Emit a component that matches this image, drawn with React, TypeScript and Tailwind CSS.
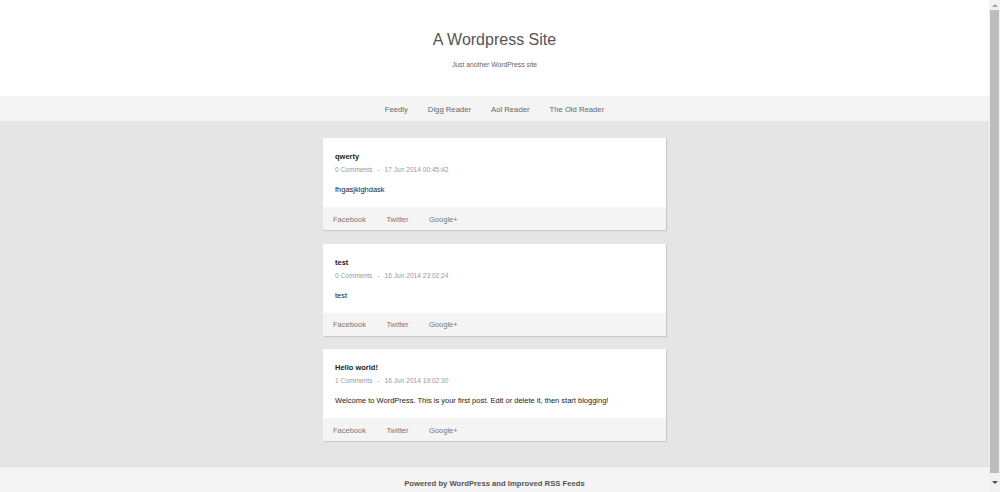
const posts = [
  { title: "qwerty", comments: "0 Comments", date: "17 Jun 2014 00:45:42", body: "fhgasjklghdask" },
  { title: "test", comments: "0 Comments", date: "16 Jun 2014 23:02:24", body: "test" },
  {
    title: "Hello world!",
    comments: "1 Comments",
    date: "16 Jun 2014 19:02:30",
    body: "Welcome to WordPress. This is your first post. Edit or delete it, then start blogging!",
  },
];

const readers = ["Feedly", "Digg Reader", "Aol Reader", "The Old Reader"];

function PostCard({ title, comments, date, body }: (typeof posts)[number]) {
  return (
    <article className="bg-white shadow-[1px_1px_1px_rgba(0,0,0,0.12)]">
      <div className="px-3 pt-[14px] pb-[12px]">
        <h2 className="text-[7.5px] leading-[10px] font-bold text-[#222]">{title}</h2>
        <div className="mt-[3px] text-[6.6px] leading-[10px] text-[#999]">
          {comments}
          <span className="mx-[5px]">-</span>
          {date}
        </div>
        <p className="mt-[10px] text-[7.5px] leading-[10px] text-[#222]">{body}</p>
      </div>
      {/* Share links */}
      <div className="flex h-[23px] items-center gap-[20.5px] bg-[#f4f4f4] px-[10px] pt-[2px] text-[7.5px] text-[#777]">
        <span>Facebook</span>
        <span>Twitter</span>
        <span>Google+</span>
      </div>
    </article>
  );
}

export default function App() {
  return (
    <div className="flex h-[492px] w-[1000px] overflow-hidden font-['Liberation_Sans',Arial,sans-serif]">
      <div className="flex flex-1 flex-col">
        {/* Header */}
        <header className="h-[96px] bg-white pt-[30px] text-center">
          <h1 className="text-[16px] leading-[20px] text-[#555]">A Wordpress Site</h1>
          <p className="mt-[10px] text-[6.8px] leading-[10px] text-[#666]">Just another WordPress site</p>
        </header>

        {/* Nav */}
        <nav className="flex h-[25px] items-center justify-center gap-[20px] bg-[#f4f4f4] pt-[2px] text-[7.7px] text-[#666]">
          {readers.map((r) => (
            <span key={r}>{r}</span>
          ))}
        </nav>

        {/* Posts */}
        <main className="flex flex-1 flex-col items-center gap-[13.5px] bg-[#e5e5e5] pt-[17px]">
          {posts.map((p) => (
            <div key={p.title} className="w-[343px]">
              <PostCard {...p} />
            </div>
          ))}
        </main>

        <footer className="h-[26px] border-t border-[#dcdcdc] bg-[#f4f4f4] pt-[12px] text-center text-[7.7px] leading-[10px] font-bold text-[#555]">
          Powered by WordPress and Improved RSS Feeds
        </footer>
      </div>

      {/* Scrollbar */}
      <div className="flex w-[11px] flex-col items-center bg-[#f1f1f1]">
        <div className="flex h-[10px] items-center justify-center">
          <div className="h-0 w-0 border-x-[3px] border-b-[3px] border-x-transparent border-b-[#a3a3a3]" />
        </div>
        <div className="w-[9px] flex-1 bg-[#bcbcbc]" />
        <div className="flex h-[19px] items-center justify-center">
          <div className="h-0 w-0 border-x-[3px] border-t-[3px] border-x-transparent border-t-[#505050]" />
        </div>
      </div>
    </div>
  );
}
